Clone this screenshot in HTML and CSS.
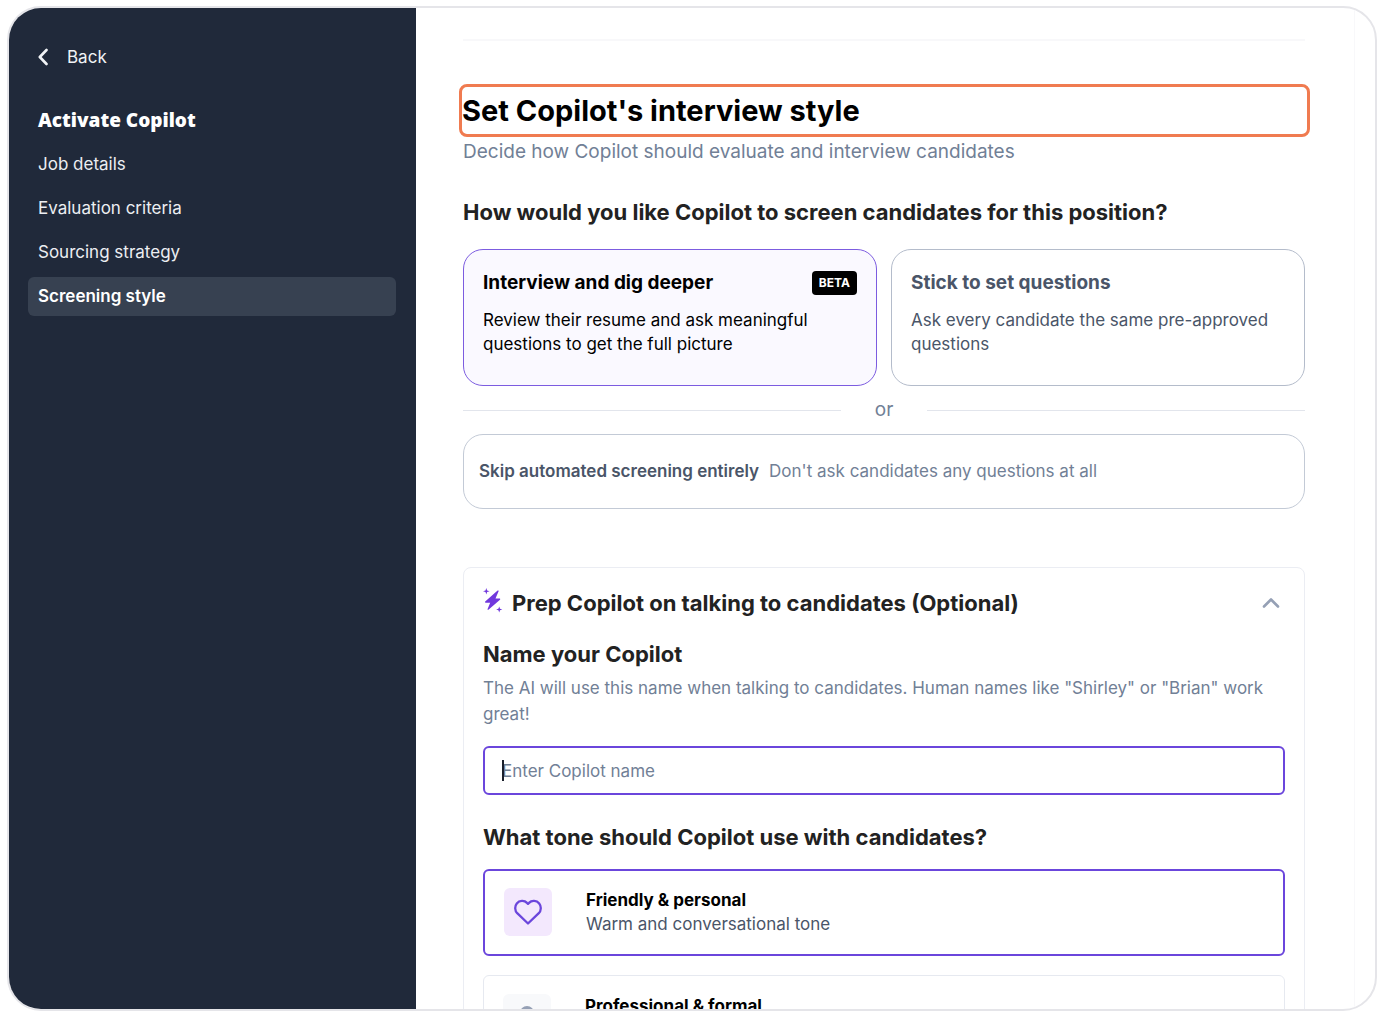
FILE: index.html
```html
<!DOCTYPE html>
<html lang="en">

<head>
    <meta charset="utf-8">
    <title>Activate Copilot</title>
    <meta name="viewport" content="width=device-width, initial-scale=1">
    <link rel="stylesheet" href="styles.css">
</head>

<body>
    <div class="frame">
        <aside class="sidebar">
            <a href="#" class="back">
                <svg width="10" height="18" viewBox="0 0 10 18" fill="none" stroke="currentColor" stroke-width="2.6" stroke-linecap="round" stroke-linejoin="round">
                    <path d="M8.5 2L1.8 9l6.7 7" />
                </svg>
                Back
            </a>
            <h2 class="sidebar-title">Activate Copilot</h2>
            <nav class="steps">
                <a href="#" class="step">Job details</a>
                <a href="#" class="step">Evaluation criteria</a>
                <a href="#" class="step">Sourcing strategy</a>
                <a href="#" class="step active" aria-current="step">Screening style</a>
            </nav>
        </aside>

        <main class="main">
            <form class="content">
                <hr class="divider">
                <h1 class="title">Set Copilot's interview style</h1>
                <p class="subtitle">Decide how Copilot should evaluate and interview candidates</p>

                <h2 class="heading">How would you like Copilot to screen candidates for this position?</h2>
                <div class="cards">
                    <label class="card">
                        <input type="radio" name="screening" class="hidden-radio" checked>
                        <span class="card-head">
                            <span class="card-title">Interview and dig deeper</span>
                            <span class="beta">BETA</span>
                        </span>
                        <span class="card-text">Review their resume and ask meaningful questions to get the full picture</span>
                    </label>
                    <label class="card">
                        <input type="radio" name="screening" class="hidden-radio">
                        <span class="card-head">
                            <span class="card-title">Stick to set questions</span>
                        </span>
                        <span class="card-text">Ask every candidate the same pre-approved questions</span>
                    </label>
                </div>
                <div class="or">or</div>
                <label class="skip">
                    <input type="radio" name="screening" class="hidden-radio">
                    <strong>Skip automated screening entirely</strong>
                    <span>Don't ask candidates any questions at all</span>
                </label>

                <section class="panel">
                    <div class="panel-head">
                        <svg width="20" height="30" viewBox="0 0 20 30" fill="#7138dd">
                            <path d="M14.6 2.6L2.2 13.6c-.5.5-.2 1.2.5 1.2h4.5L4.6 20.9c-.3.8.5 1.3 1.1.7L17 11.8c.5-.5.2-1.2-.5-1.2h-4L15.6 3.3c.3-.7-.4-1.2-1-.7z" />
                            <path d="M3.300 0l.8 2.500 2.500.8-2.500.8-.8 2.500-.8-2.500L0 3.300l2.500-.8z" />
                            <path d="M16.200 18.400l.8 2.300 2.300.8-2.300.8-.8 2.300-.8-2.300-2.300-.8 2.300-.8z" />
                        </svg>
                        <h2 class="heading">Prep Copilot on talking to candidates (Optional)</h2>
                        <button type="button" class="collapse" aria-label="Collapse">
                            <svg width="18" height="12" viewBox="0 0 18 12" fill="none" stroke="currentColor" stroke-width="2.6" stroke-linecap="round" stroke-linejoin="round">
                                <path d="M2 9.500L9 2.500l7 7" />
                            </svg>
                        </button>
                    </div>

                    <label for="copilotName" class="heading">Name your Copilot</label>
                    <p class="hint">The AI will use this name when talking to candidates. Human names like "Shirley" or "Brian" work great!</p>
                    <div class="field">
                        <input type="text" id="copilotName" placeholder="Enter Copilot name">
                        <span class="caret"></span>
                    </div>

                    <h2 class="heading">What tone should Copilot use with candidates?</h2>
                    <div class="tones">
                        <label class="tone">
                            <input type="radio" name="tone" class="hidden-radio" checked>
                            <span class="tone-icon">
                                <svg width="28" height="26" viewBox="0 0 28 26" fill="none" stroke="currentColor" stroke-width="2.3" stroke-linejoin="round">
                                    <path d="M14 24.500L3.200 14.200C.7 11.600.6 7.300 2.800 4.500 5.400 1.300 10.300 1 13 3.900l1 1 1-1c2.700-2.900 7.600-2.600 10.200.6 2.200 2.800 2.100 7.100-.4 9.700z" />
                                </svg>
                            </span>
                            <span class="tone-text">
                                <strong>Friendly &amp; personal</strong>
                                <span>Warm and conversational tone</span>
                            </span>
                        </label>
                        <label class="tone">
                            <input type="radio" name="tone" class="hidden-radio">
                            <span class="tone-icon">
                                <svg width="24" height="26" viewBox="0 0 24 26" fill="currentColor">
                                    <circle cx="12" cy="8" r="7" />
                                    <path d="M2 25c0-6 4-9 10-9s10 3 10 9z" />
                                </svg>
                            </span>
                            <span class="tone-text">
                                <strong>Professional &amp; formal</strong>
                            </span>
                        </label>
                    </div>
                </section>
            </form>
        </main>
    </div>
</body>

</html>
```
FILE: styles.css
```css
* {
    box-sizing: border-box;
}

body {
    margin: 0;
    padding: 6px 7px 5px;
    height: 100vh;
    overflow: hidden;
    background-color: #fff;
    font-family: Inter, sans-serif;
    font-size: 17px;
    line-height: 24px;
    color: #000;
}

h1,
h2,
p {
    margin: 0;
}

.frame {
    display: flex;
    height: 100%;
    overflow: hidden;
    border: 2px solid #e5e5e9;
    border-radius: 34px;
}

/* sidebar */
.sidebar {
    flex: 0 0 407px;
    padding: 37px 20px 37px 19px;
    background-color: #20293a;
    color: #fff;
}

.back {
    display: flex;
    align-items: center;
    gap: 19px;
    padding-left: 10px;
    color: #f1f3f6;
    text-decoration: none;
}

.sidebar-title {
    margin: 36px 0 10px;
    padding-left: 10px;
    font-family: "Open Sans", sans-serif;
    font-size: 19px;
    font-weight: 800;
    line-height: 30px;
}

.steps {
    display: flex;
    flex-direction: column;
    gap: 5px;
}

.step {
    padding: 7px 10px 8px;
    border-radius: 6px;
    color: #eceef2;
    text-decoration: none;
}

.step.active {
    background-color: #374151;
    color: #fff;
    font-weight: 600;
}

/* main column */
.main {
    flex: 1;
    min-width: 0;
    padding-right: 20px;
}

.content {
    height: 100%;
    overflow: hidden;
    padding: 31px 49px 0 47px;
    border-right: 1px solid #f8f8fa;
}

.divider {
    height: 2px;
    margin: 0;
    border: 0;
    background-color: #f8f8fa;
}

.title {
    margin: 43px -5px 0 -4px;
    border: 3px solid #f07b50;
    border-radius: 8px;
    font-size: 29px;
    font-weight: 700;
    line-height: 47px;
}

.subtitle {
    font-size: 19px;
    line-height: 30px;
    color: #718096;
}

.heading {
    display: block;
    font-size: 22px;
    font-weight: 700;
    line-height: 30px;
    color: #222;
}

.subtitle + .heading {
    margin-top: 30px;
}

.hidden-radio {
    position: absolute;
    opacity: 0;
}

.cards {
    display: grid;
    grid-template-columns: 1fr 1fr;
    gap: 14px;
    margin-top: 22px;
}

.card {
    padding: 19px 19px 29px;
    border: 1px solid #b4bccb;
    border-radius: 20px;
    color: #4a5568;
}

.card:has(:checked) {
    border-color: #7c5ce0;
    background-color: #faf9ff;
    color: #000;
}

.card-head {
    display: flex;
    align-items: center;
    justify-content: space-between;
    margin-bottom: 11px;
}

.card-title {
    font-size: 19px;
    font-weight: 700;
    line-height: 28px;
}

.card-text {
    display: block;
}

.beta {
    padding: 0 7px;
    border-radius: 4px;
    background-color: #000;
    color: #fff;
    font-size: 12px;
    font-weight: 700;
}

.or {
    display: flex;
    align-items: center;
    gap: 34px;
    font-size: 19px;
    line-height: 48px;
    color: #718096;
}

.or::before,
.or::after {
    content: "";
    flex: 1;
    height: 1px;
    background-color: #e2e5ec;
}

.skip {
    display: flex;
    gap: 10px;
    padding: 24px 15px 25px;
    border: 1px solid #c3cad6;
    border-radius: 20px;
    color: #718096;
}

.skip strong {
    font-weight: 600;
    color: #4a5568;
}

/* prep panel */
.panel {
    margin-top: 58px;
    padding: 20px 19px;
    border: 1px solid #ebedf3;
    border-radius: 8px;
}

.panel-head {
    display: flex;
    align-items: center;
    gap: 9px;
    margin-bottom: 21px;
}

.collapse {
    margin-left: auto;
    padding: 0 5px;
    border: 0;
    background: none;
    color: #95a0b5;
}

.collapse svg {
    display: block;
}

.hint {
    margin-top: 6px;
    line-height: 26px;
    color: #718096;
}

.field {
    position: relative;
    margin: 19px 0 27px;
}

.field input {
    display: block;
    width: 100%;
    height: 49px;
    padding: 0 17px;
    border: 2px solid #6b46dc;
    border-radius: 6px;
    outline: 0;
    font: inherit;
    caret-color: transparent;
}

.field input::placeholder {
    color: #718096;
}

.caret {
    position: absolute;
    top: 14px;
    left: 19px;
    width: 2px;
    height: 21px;
    background-color: #1a202c;
}

.tones {
    display: grid;
    gap: 19px;
    margin-top: 17px;
}

.tone {
    display: flex;
    align-items: flex-start;
    gap: 34px;
    padding: 18px 19px;
    border: 1px solid #e6e9f0;
    border-radius: 6px;
}

.tone:has(:checked) {
    padding: 17px 19px 18px;
    border: 2px solid #6b46dc;
}

.tone-icon {
    display: flex;
    align-items: center;
    justify-content: center;
    width: 48px;
    height: 48px;
    border-radius: 6px;
    background-color: #f8f9fb;
    color: #95a0b5;
}

.tone:has(:checked) .tone-icon {
    background-color: #f3e8fd;
    color: #6b46dc;
}

.tone-text {
    display: flex;
    flex-direction: column;
    color: #4a5568;
}

.tone-text strong {
    font-weight: 700;
    color: #000;
}
```
